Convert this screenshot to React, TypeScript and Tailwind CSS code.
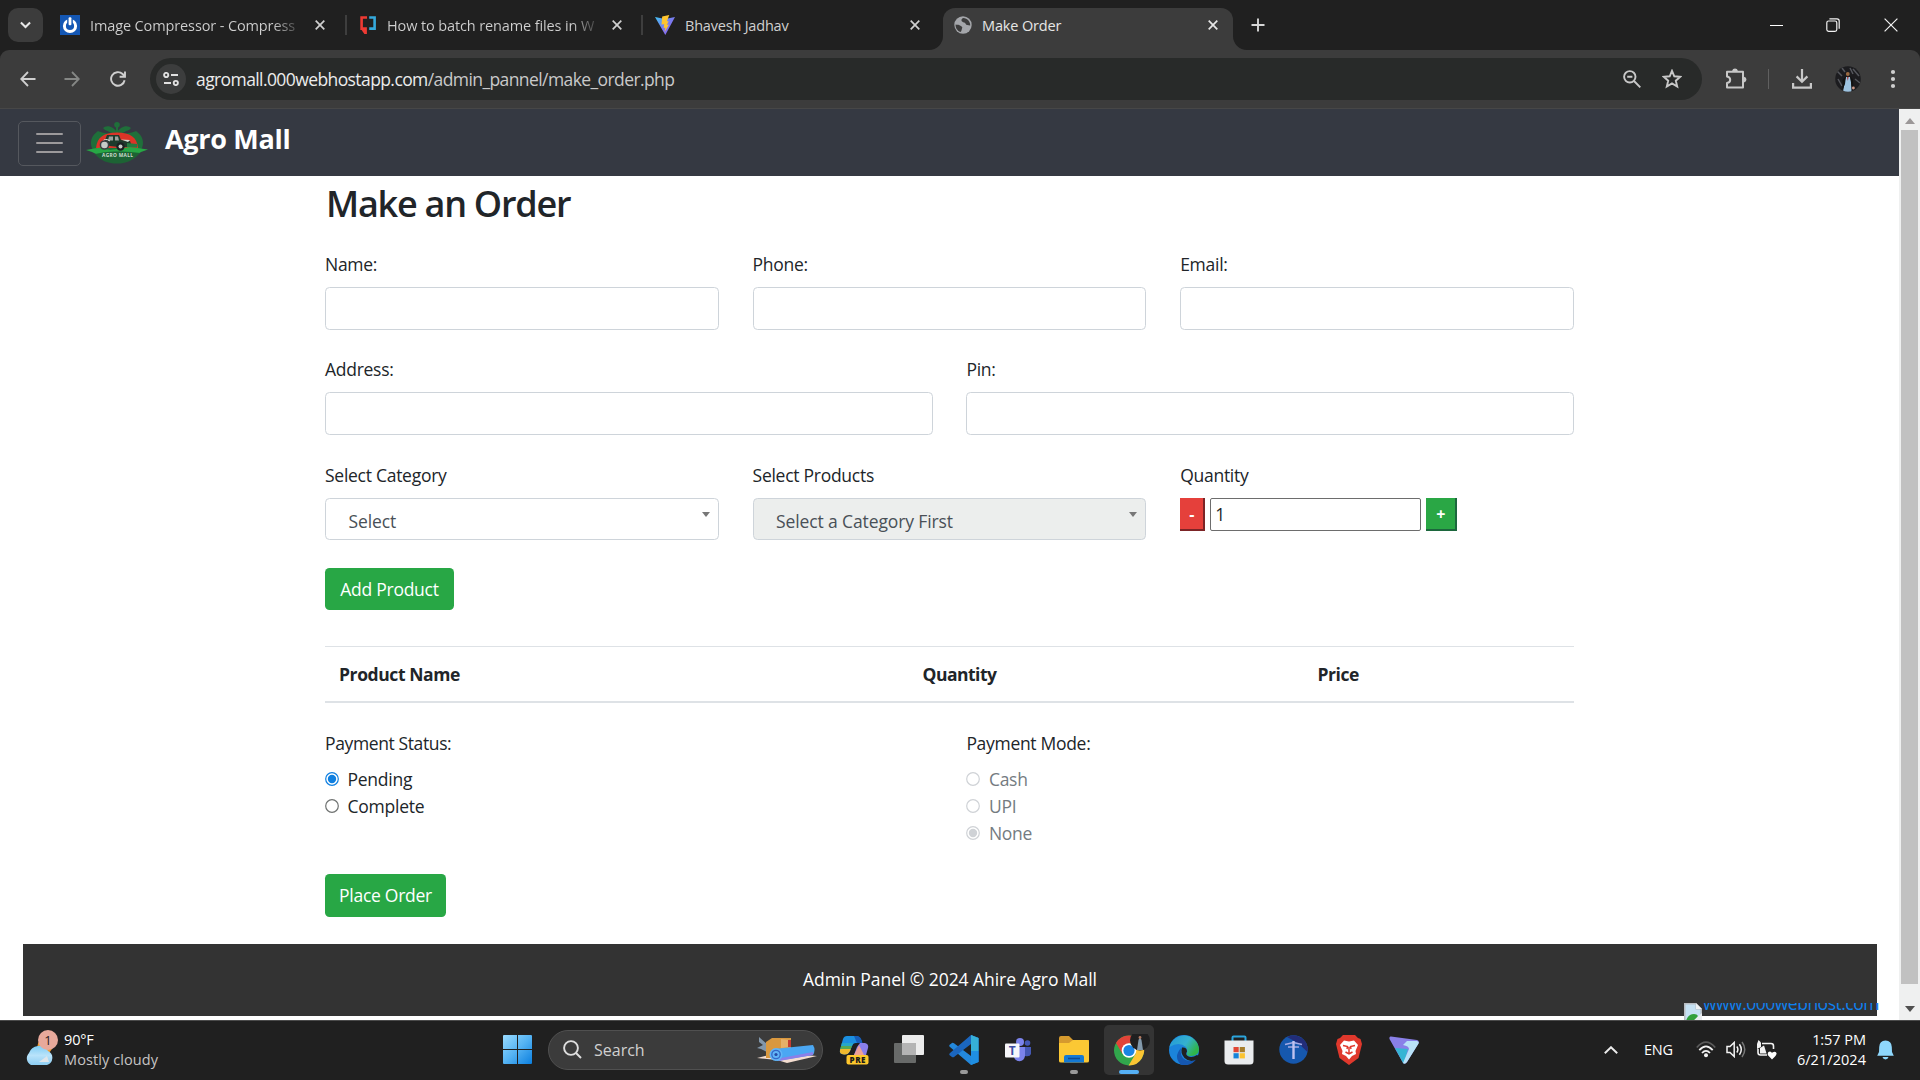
import React from "react";

function CloseIcon({ className }: { className: string }) {
  return (
    <svg viewBox="0 0 10 10" className={className} fill="none" stroke="currentColor" strokeWidth="1.7">
      <path d="M0.7 0.7 L9.3 9.3 M9.3 0.7 L0.7 9.3" />
    </svg>
  );
}

function TabStrip() {
  return (
    <div className="flex h-[50px] w-full bg-[#202020] text-[14.5px] text-[#d0d0d0]">
      <div className="flex w-[345px] items-center">
        <div className="ml-2 flex h-[34px] w-[35px] items-center justify-center rounded-[10px] bg-[#3c3c3c]">
          <svg viewBox="0 0 12 8" className="h-[8px] w-[11px]" fill="none" stroke="#e8e8e8" strokeWidth="2.2">
            <path d="M1 1.2 L6 6.2 L11 1.2" />
          </svg>
        </div>
        <svg viewBox="0 0 20 20" className="ml-[17px] h-5 w-5">
          <rect width="20" height="20" fill="#1457b4" />
          <circle cx="10" cy="11" r="5.6" fill="none" stroke="#fff" strokeWidth="3" />
          <rect x="7.2" y="2" width="5.6" height="8" fill="#1457b4" />
          <rect x="8.6" y="2.3" width="2.8" height="8" rx="1" fill="#fff" />
        </svg>
        <div className="mt-[2px] ml-[10px] w-[208px] overflow-hidden whitespace-nowrap bg-gradient-to-r from-[#d0d0d0] from-88% to-[#444444] bg-clip-text tracking-[-0.12px] text-transparent">
          Image Compressor - Compress
        </div>
        <CloseIcon className="ml-[17px] h-[10px] w-[10px]" />
      </div>
      <div className="flex w-[296px] items-center">
        <div className="h-5 w-[2px] bg-[#3e3e3e]" />
        <svg viewBox="0 0 16 18" className="ml-[13px] h-[18px] w-4" fill="none" strokeWidth="2.6">
          <path d="M7 1.5 H1.6 V12.6 H5.6 V17.5 L2.5 13" stroke="#ee3a33" />
          <path d="M9.2 1.5 H14.6 V12.6 H9.2" stroke="#35a9dc" />
        </svg>
        <div className="mt-[2px] ml-[11px] w-[210px] overflow-hidden whitespace-nowrap bg-gradient-to-r from-[#d0d0d0] from-88% to-[#3c3c3c] bg-clip-text tracking-[-0.12px] text-transparent">
          How to batch rename files in W
        </div>
        <CloseIcon className="ml-[15px] h-[10px] w-[10px]" />
      </div>
      <div className="flex w-[302px] items-center">
        <div className="h-5 w-[2px] bg-[#3e3e3e]" />
        <svg viewBox="0 0 20 20" className="ml-3 h-5 w-5">
          <defs>
            <linearGradient id="vite" x1="0" y1="0" x2="1" y2="1">
              <stop offset="0" stopColor="#41c5f5" />
              <stop offset="0.5" stopColor="#7a7bf0" />
              <stop offset="1" stopColor="#8d5cf0" />
            </linearGradient>
          </defs>
          <path d="M0 2 L10 4 L20 2 L10.3 20 Z" fill="url(#vite)" />
          <path d="M14.3 0 L7.2 1.4 L6.5 9.6 L9.2 9.2 L8.6 13.2 L10.4 12.6 L9.6 17 L14 9.6 L11.8 9.9 L13.7 6.2 L11.9 6.3 Z" fill="#ffc530" />
        </svg>
        <div className="mt-[2px] ml-[10px] w-[210px] whitespace-nowrap tracking-[-0.2px]">Bhavesh Jadhav</div>
        <CloseIcon className="ml-[15px] h-[10px] w-[10px]" />
      </div>
      <div className="relative mt-[8px] flex h-[42px] w-[290px] items-center rounded-t-[12px] bg-[#3c3c3c] pb-2 text-[#e6e6e6]">
        <svg viewBox="0 0 14 14" className="absolute bottom-0 left-[-14px] h-[14px] w-[14px]">
          <path d="M14 0 V14 H0 A14 14 0 0 0 14 0 Z" fill="#3c3c3c" />
        </svg>
        <svg viewBox="0 0 14 14" className="absolute right-[-14px] bottom-0 h-[14px] w-[14px]">
          <path d="M0 0 V14 H14 A14 14 0 0 1 0 0 Z" fill="#3c3c3c" />
        </svg>
        <svg viewBox="0 0 18 18" className="ml-[11px] h-[18px] w-[18px]">
          <circle cx="9" cy="9" r="8.7" fill="#a4a6aa" />
          <path d="M1.6 8.5 C3 9 4 8.4 5.5 9.2 C7.5 10.3 9 11 8 12.5 C7.5 13.8 7.8 15 6.5 16 C3.5 15 1.4 12 1.6 8.5 Z" fill="#3c3c3c" />
          <path d="M9 2 C7.6 2.8 7 4 7.8 5.3 C9 6.8 11 6 11.6 7.8 C12.2 9.6 14 9 16.2 9.6 C16.6 6 13.5 1.9 9 2 Z" fill="#3c3c3c" />
        </svg>
        <div className="mt-[2px] ml-[10px] w-[210px] tracking-[-0.15px]">Make Order</div>
        <CloseIcon className="ml-[16px] h-[10px] w-[10px]" />
      </div>
      <div className="flex flex-1 items-center">
        <svg viewBox="0 0 14 14" className="ml-[18px] h-[14px] w-[14px]" stroke="#d6d6d6" strokeWidth="1.9">
          <path d="M7 0.5 V13.5 M0.5 7 H13.5" />
        </svg>
        <div className="flex-1" />
        <div className="h-px w-[13px] bg-white" />
        <svg viewBox="0 0 14 14" className="ml-[43px] h-[14px] w-[14px]" fill="none" stroke="#f2f2f2" strokeWidth="1.2">
          <rect x="0.8" y="3" width="10" height="10.3" rx="1.8" />
          <path d="M3.4 0.8 H11 Q13.2 0.8 13.2 3 V10.8" />
        </svg>
        <svg viewBox="0 0 14 14" className="mr-[22px] ml-[44px] h-[14px] w-[14px]" stroke="#f2f2f2" strokeWidth="1.2">
          <path d="M0.6 0.6 L13.4 13.4 M13.4 0.6 L0.6 13.4" />
        </svg>
      </div>
    </div>
  );
}

function Toolbar() {
  return (
    <div className="h-[59px] bg-[#202020]">
      <div className="flex h-[59px] items-center rounded-t-[9px] border-b border-[#474747] bg-[#3c3c3c]">
        <svg viewBox="0 0 16 16" className="ml-5 h-4 w-4" fill="none" stroke="#cfcfcf" strokeWidth="1.8">
          <path d="M15.5 8 H1.5 M8 1 L1.2 8 L8 15" />
        </svg>
        <svg viewBox="0 0 16 16" className="ml-[28px] h-4 w-4" fill="none" stroke="#858785" strokeWidth="1.8">
          <path d="M0.5 8 H14.5 M8 1 L14.8 8 L8 15" />
        </svg>
        <svg viewBox="0 0 16 16" className="ml-[30px] h-4 w-4" fill="none" stroke="#cfcfcf" strokeWidth="1.9">
          <path d="M14.6 9.2 A6.8 6.8 0 1 1 12.6 3 L14.6 5 M15 0.5 V5.7 H9.6" />
        </svg>
        <div className="ml-[24px] flex h-[42px] w-[1552px] items-center rounded-full bg-[#282a29]">
          <div className="ml-[6px] flex h-[30px] w-[30px] items-center justify-center rounded-full bg-[#3c3d3d]">
            <svg viewBox="0 0 16 14" className="h-[14px] w-4" fill="none" stroke="#e0e0e0" strokeWidth="1.9">
              <circle cx="3.2" cy="3" r="2.1" />
              <path d="M8 3 H15 M1 11 H8" />
              <circle cx="12.8" cy="11" r="2.1" />
            </svg>
          </div>
          <div className="mt-px ml-[10px] text-[17.5px] tracking-[-0.59px] whitespace-nowrap text-[#ececec]">
            agromall.000webhostapp.com<span className="text-[#c9c9c9]">/admin_pannel/make_order.php</span>
          </div>
          <div className="flex-1" />
          <svg viewBox="0 0 18 18" className="h-[18px] w-[18px]" fill="none" stroke="#c8c8c8" strokeWidth="1.9">
            <circle cx="6.8" cy="6.8" r="5.7" />
            <path d="M4.2 6.8 H9.4 M11 11 L17.3 17.3" />
          </svg>
          <svg viewBox="0 0 20 20" className="mr-[20px] ml-[21px] h-5 w-5" fill="none" stroke="#c8c8c8" strokeWidth="1.9">
            <path d="M10 1.8 L12.3 7.3 L18.3 7.8 L13.8 11.7 L15.2 17.6 L10 14.4 L4.8 17.6 L6.2 11.7 L1.7 7.8 L7.7 7.3 Z" />
          </svg>
        </div>
        <svg viewBox="0 0 22 22" className="ml-[23px] h-[22px] w-[22px]" fill="none" stroke="#c8c8c8" strokeWidth="2" strokeLinejoin="round">
          <path d="M2 3.8 H18 V19.6 H2 V15 Q5.2 14.5 5.2 11.7 Q5.2 9 2 8.4 Z" />
          <path d="M8 3 A2.1 2.1 0 0 1 12 3 M19 9.6 A2.1 2.1 0 0 1 19 13.6" fill="#c8c8c8" />
        </svg>
        <div className="ml-[21px] h-5 w-px bg-[#606060]" />
        <svg viewBox="0 0 20 20" className="ml-[23px] h-5 w-5" fill="none" stroke="#c8c8c8" strokeWidth="2.2">
          <path d="M10 0 V12.4 M4.6 7.4 L10 12.8 L15.4 7.4 M1.1 14 V18.7 H18.9 V14" />
        </svg>
        <svg viewBox="0 0 26 26" className="ml-[23px] h-[26px] w-[26px]">
          <defs>
            <clipPath id="av"><circle cx="13" cy="13" r="12.8" /></clipPath>
          </defs>
          <g clipPath="url(#av)">
            <rect width="26" height="26" fill="#1c1c1f" />
            <path d="M2 5 L7 10 M18 3 L24 10 M3 13 L7 20 M20 13 L25 17 M7 2 L10 6 M15 2 L18 8" stroke="#54565c" strokeWidth="1.5" />
            <path d="M8 26 L10 14 L11 11 H15 L16 15 L16.5 26 Z" fill="#9dc3e0" />
            <path d="M7.5 14 L11 10 L10 18 L7.5 24 Z M15 10 L18 14 L18.5 24 L16.5 20 Z" fill="#111" />
            <circle cx="12.8" cy="8" r="1.9" fill="#9a6a42" />
            <path d="M12 11 L13.6 11 L12.8 15 Z" fill="#a33" />
            <circle cx="18.4" cy="22" r="1.4" fill="#c98" />
          </g>
        </svg>
        <svg viewBox="0 0 6 20" className="ml-[29px] h-5 w-[6px]" fill="#cfcfcf">
          <circle cx="3" cy="3" r="2.1" />
          <circle cx="3" cy="10" r="2.1" />
          <circle cx="3" cy="17" r="2.1" />
        </svg>
      </div>
    </div>
  );
}

function AgroLogo() {
  return (
    <svg viewBox="0 0 62 42" className="ml-[5px] h-[42px] w-[62px]">
      <path d="M12 9 C5 14 3 21 7 28 H55 C59 21 57 14 50 9 C42 13 20 13 12 9 Z" fill="#1f6f3a" />
      <path d="M31 10 C25 2 19 4 17 6 C21 11 27 12 31 10 C35 12 41 11 45 6 C43 4 37 2 31 10 Z" fill="#1f6f3a" />
      <path d="M15 10 Q19 6 25 11 Z M47 10 Q43 6 37 11 Z" fill="#353942" />
      <circle cx="31" cy="2.8" r="2.8" fill="#1f6f3a" />
      <path d="M31 4 V11" stroke="#1f6f3a" strokeWidth="2" />
      <path d="M10 26 C11 15 18 10.5 31 10.5 C44 10.5 51 15 52 26 Z" fill="#dc3427" />
      <path d="M0 28 L8 26.5 L15 25.5 L24 28 L44 25 L62 27.5 L55 30 L52 32 L31 34 L10 32 L6 30 Z" fill="#27a745" />
      <path d="M9 32 Q20 29 31 29.5 Q42 29 54 31 C47 39 40 41.5 31 41.5 C22 41.5 15 39 9 32 Z" fill="#1d6334" />
      <path d="M21 13 H33 L35 18 L44 19 L46 25 H33 L24 24 L15 21 L19 18 Z" fill="#1f3a2c" />
      <path d="M23 14.5 H27 V18.5 H22 Z M29 14.5 H32 L33 18.5 H29 Z" fill="#9ba29d" />
      <path d="M16 20 Q19 15.5 24 19" fill="none" stroke="#e0e4e0" strokeWidth="1" />
      <circle cx="18.5" cy="23" r="4.8" fill="#3a3f40" />
      <circle cx="18.5" cy="23" r="3.3" fill="#c7ccc7" />
      <circle cx="34.5" cy="24.5" r="4.2" fill="#1b2022" />
      <circle cx="34.5" cy="24.5" r="2" fill="#c7ccc7" />
      <path d="M35 17.5 L44 18 L42 20 Z" fill="#d5dbd5" />
      <path d="M41 21 L51 22 L51 25.5 L41 25 Z" fill="#237b3f" />
      <text x="31.5" y="34.8" textAnchor="middle" fontSize="4.8" fontWeight="700" textLength="31" fill="#cfdccf" fontFamily="Open Sans">AGRO MALL</text>
    </svg>
  );
}

function Field({ label }: { label: string }) {
  return (
    <div className="flex-1">
      <div className="mb-[9px] h-[27px] leading-[27px]">{label}</div>
      <div className="h-[42.75px] rounded-[4.5px] border border-[#ced4da] bg-white" />
    </div>
  );
}

function SelectField({ label, value, disabled }: { label: string; value: string; disabled?: boolean }) {
  return (
    <div className="flex-1">
      <div className="mb-[9px] h-[27px] leading-[27px]">{label}</div>
      <div
        className={
          disabled
            ? "flex h-[42.75px] justify-between rounded-[4.5px] border border-[#ced4da] bg-[#eceeed] pr-[8px] pl-[22.5px] text-[#495057]"
            : "flex h-[42.75px] justify-between rounded-[4.5px] border border-[#ced4da] bg-white pr-[8px] pl-[22.5px] text-[#495057]"
        }
      >
        <span className="pt-[9px] leading-[27px] tracking-[-0.12px]">{value}</span>
        <svg viewBox="0 0 8 5" className="mt-[13px] h-[5px] w-2">
          <path d="M0 0 H8 L4 5 Z" fill="#777" />
        </svg>
      </div>
    </div>
  );
}

function Radio({ label, checked, disabled }: { label: string; checked?: boolean; disabled?: boolean }) {
  const ring = disabled ? "#cfd2d6" : checked ? "#0f7fe0" : "#6f7271";
  return (
    <div className={disabled ? "flex h-[27px] text-[#747b81]" : "flex h-[27px]"}>
      <svg viewBox="0 0 14 14" className="mt-[6px] h-[14px] w-[14px]">
        <circle cx="7" cy="7" r="6.3" fill="#fff" stroke={ring} strokeWidth="1.2" />
        {checked && <circle cx="7" cy="7" r="4.2" fill={ring} />}
      </svg>
      <span className="ml-[8.5px] leading-[27px] tracking-[-0.25px]">{label}</span>
    </div>
  );
}

function PageContent() {
  return (
    <div className="flex h-[911px] w-[1899px] flex-col overflow-hidden bg-white">
      <div className="flex h-[67px] shrink-0 items-center bg-[#353942]">
        <div className="mt-px ml-[18px] flex h-[45px] w-[63px] flex-col items-center justify-center gap-[6.5px] rounded-[5px] border border-[#55585e]">
          <div className="h-[2.5px] w-[27px] rounded-full bg-[#9c9a9c]" />
          <div className="h-[2.5px] w-[27px] rounded-full bg-[#9c9a9c]" />
          <div className="h-[2.5px] w-[27px] rounded-full bg-[#9c9a9c]" />
        </div>
        <AgroLogo />
        <div className="mb-[6px] ml-[17px] text-[27px] font-bold tracking-[-0.3px] text-white">Agro Mall</div>
      </div>
      <div className="ml-[325px] flex w-[1249px] flex-col items-start text-[17.5px] tracking-[-0.27px] text-[#212529]">
        <h2 className="mt-[6px] h-[43px] pl-px text-[36px] leading-[43px] font-semibold tracking-[-1.25px]">Make an Order</h2>
        <div className="mt-[26px] flex w-full gap-[33.75px]">
          <Field label="Name:" />
          <Field label="Phone:" />
          <Field label="Email:" />
        </div>
        <div className="mt-[26.5px] flex w-full gap-[33.75px]">
          <Field label="Address:" />
          <Field label="Pin:" />
        </div>
        <div className="mt-[26.5px] flex w-full gap-[33.75px]">
          <SelectField label="Select Category" value="Select" />
          <SelectField label="Select Products" value="Select a Category First" disabled />
          <div className="flex-1">
            <div className="mb-[9px] h-[27px] leading-[27px]">Quantity</div>
            <div className="flex h-[33px]">
              <div className="flex w-[25px] items-center justify-center border-r-2 border-b-2 border-[#7c2426] bg-[#e5403b] pt-[2px] text-[16px] font-bold text-white">-</div>
              <div className="ml-[5px] w-[211px] rounded-[2px] border border-[#6d6d6d] pl-[4px] leading-[31px]">1</div>
              <div className="ml-[5px] flex w-[31px] items-center justify-center border-r-2 border-b-2 border-[#1c673d] bg-[#2aa745] pt-[2px] text-[16px] font-bold text-white">+</div>
            </div>
          </div>
        </div>
        <div className="mt-[28px] flex h-[42px] w-[129px] items-center justify-center rounded-[4.5px] bg-[#28a745] whitespace-nowrap text-white">Add Product</div>
        <div className="mt-[36px] flex h-[57px] w-full items-center border-t border-b-2 border-[#dee2e6] pl-[14px] font-bold tracking-[-0.45px]">
          <div className="w-[583.5px] tracking-[-0.4px]">Product Name</div>
          <div className="w-[395px] tracking-[-0.5px]">Quantity</div>
          <div>Price</div>
        </div>
        <div className="mt-[27px] flex w-full gap-[33.75px]">
          <div className="flex-1">
            <div className="mb-[9px] h-[27px] leading-[27px] tracking-[-0.38px]">Payment Status:</div>
            <Radio label="Pending" checked />
            <Radio label="Complete" />
          </div>
          <div className="flex-1">
            <div className="mb-[9px] h-[27px] leading-[27px] tracking-[-0.3px]">Payment Mode:</div>
            <Radio label="Cash" disabled />
            <Radio label="UPI" disabled />
            <Radio label="None" checked disabled />
          </div>
        </div>
        <div className="mt-[27px] flex h-[43px] w-[121px] items-center justify-center rounded-[4.5px] bg-[#28a745] pb-px whitespace-nowrap text-white">Place Order</div>
      </div>
      <div className="relative mx-[23px] mt-[27px] flex h-[72px] w-[1854px] shrink-0 items-center justify-center bg-[#333333] pb-[2px] text-[17.5px] tracking-[-0.06px] text-white">
        <span>Admin Panel © 2024 Ahire Agro Mall</span>
        <div className="absolute top-[59px] left-[1661px] flex h-[17px] w-[200px] overflow-hidden">
          <svg viewBox="0 0 18 18" className="h-[18px] w-[18px] shrink-0">
            <path d="M0 0 H12 L18 6 V18 H0 Z" fill="#b9bdc2" />
            <path d="M1.5 1.5 H11.5 V6.5 H16.5 V18 H1.5 Z" fill="#c6e2f4" />
            <path d="M2 18 Q4 11 10 11 Q13 11 14 13 L10 18 Z" fill="#31a03c" />
            <path d="M12 0 L18 6 H12 Z" fill="#eef1f4" />
            <path d="M18 10 L9 18 H18 Z" fill="#e8ecef" />
          </svg>
          <span className="mt-[-13px] ml-px h-[27px] text-[17.5px] leading-[27px] tracking-[-0.5px] whitespace-nowrap text-[#0f80ee]">www.000webhost.com</span>
        </div>
      </div>
    </div>
  );
}

function ScrollBar() {
  return (
    <div className="flex h-[911px] w-[21px] flex-col items-center bg-[#eff0f0]">
      <svg viewBox="0 0 10 6" className="mt-[9px] h-[6px] w-[10px]"><path d="M0 6 H10 L5 0 Z" fill="#9b9798" /></svg>
      <div className="mt-[6px] h-[854px] w-[17px] bg-[#c1c1c1]" />
      <svg viewBox="0 0 10 6" className="mt-[22px] h-[6px] w-[10px]"><path d="M0 0 H10 L5 6 Z" fill="#505050" /></svg>
    </div>
  );
}

function TaskCell({ children, mark }: { children: React.ReactNode; mark?: boolean }) {
  return (
    <div className="relative flex h-[59px] w-[55px] items-center justify-center">
      {children}
      {mark && <div className="absolute bottom-[5px] h-[4px] w-2 rounded-full bg-[#9a9a9a]" />}
    </div>
  );
}

function Taskbar() {
  return (
    <div className="flex h-[60px] items-center border-t border-[#4b4b4b] bg-[#202020] pb-[2px] text-[14.5px] text-white">
      <div className="flex w-[503px] items-center">
        <svg viewBox="0 0 36 38" className="mb-[3px] ml-[23px] h-[38px] w-9">
          <defs>
            <linearGradient id="cl" x1="0" y1="0" x2="0" y2="1">
              <stop offset="0" stopColor="#7fcdf5" />
              <stop offset="0.5" stopColor="#b9e3fa" />
              <stop offset="1" stopColor="#8ccdf2" />
            </linearGradient>
          </defs>
          <circle cx="22" cy="17" r="7.5" fill="#f39a2b" />
          <path d="M8 36 A7.5 7.5 0 0 1 6 24 A10.5 10.5 0 0 1 25 22 A7.5 7.5 0 0 1 24 36 Z" fill="url(#cl)" />
          <path d="M16 33 L24 27 L26 33 Z" fill="#dfe5ea" />
          <circle cx="25" cy="11" r="10" fill="#e8a99b" />
          <text x="25" y="15.5" textAnchor="middle" fontSize="13" fill="#2b1a18" fontFamily="Open Sans">1</text>
        </svg>
        <div className="ml-[5px] leading-[20px]">
          <div className="tracking-[-0.15px]">90°F</div>
          <div className="tracking-[0.1px] text-[#c6c4c4]">Mostly cloudy</div>
        </div>
      </div>
      <svg viewBox="0 0 29 29" className="h-[29px] w-[29px]">
        <defs>
          <linearGradient id="win" x1="0" y1="0" x2="1" y2="1">
            <stop offset="0" stopColor="#9adcff" />
            <stop offset="0.5" stopColor="#55b3f3" />
            <stop offset="1" stopColor="#0b7fdf" />
          </linearGradient>
        </defs>
        <path d="M0 1 Q0 0 1 0 H14 V14 H0 Z M15 0 H28 Q29 0 29 1 V14 H15 Z M0 15 H14 V29 H1 Q0 29 0 28 Z M15 15 H29 V28 Q29 29 28 29 H15 Z" fill="url(#win)" />
      </svg>
      <div className="mr-[3px] ml-[16px] flex h-10 w-[275px] items-center rounded-full border border-[#505050] bg-[#3b3b3b]">
        <svg viewBox="0 0 19 19" className="ml-[14px] h-[19px] w-[19px]" fill="none" stroke="#dedede" strokeWidth="1.9">
          <circle cx="8" cy="8" r="6.9" />
          <path d="M13 13 L18 18" />
        </svg>
        <div className="ml-[12px] flex-1 text-[16px] tracking-[0px] text-[#d0d0d0]">Search</div>
        <svg viewBox="0 0 60 28" className="mr-[5px] h-[28px] w-[60px]">
          <path d="M0 22 L20 17 L60 20 L30 27 L20 24 Z" fill="#f4ddd0" />
          <path d="M2 1 L10 8 L12 17 L4 13 L0 12 L6 9 L2 6 Z" fill="#8297ab" />
          <path d="M9 6 L15 2 H34 L34 12 L28 22 H9 Z" fill="#d9983f" />
          <path d="M24 3 L34 4 L34 11 L24 12 Z" fill="#e5b068" />
          <path d="M31 4 H34 V11 H31 Z" fill="#c43c30" />
          <path d="M17 13 L56 9 Q59 14 56 19 L20 25 Z" fill="#4ba7f3" />
          <path d="M24 22 L56 16 L56 19 L22 25 Z" fill="#8b80e8" />
          <circle cx="19" cy="18.5" r="6.5" fill="#62b5f7" />
          <circle cx="19" cy="18.5" r="4.2" fill="none" stroke="#3468c8" strokeWidth="1.3" />
          <circle cx="19" cy="18.5" r="1.6" fill="#264ca5" />
        </svg>
      </div>
      <TaskCell>
        <svg viewBox="0 0 30 30" className="h-[30px] w-[30px]">
          <path d="M8 1 H17 Q21 1 22.5 6 L23 8 H17 Q14 8 13 11 L11 16 Q9 20 5 19.5 Q0 19 1 15 L4 4 Q5 1 8 1 Z" fill="#1b8fe0" />
          <path d="M2.9 8 H14.4 L13 11 H2.1 Z" fill="#26a7c8" />
          <path d="M2.1 11 H13 L11.8 14 H1.3 Z" fill="#56a954" />
          <path d="M1.3 14 H11.8 L11 16 Q9 20 5 19.5 Q0 19 1 15 Z" fill="#f1b92d" />
          <path d="M15 1 H18 Q22 1 23.5 8 H18 Z" fill="#165cb8" />
          <path d="M21 8 H26 Q30 9 29 13 L27 20 H15 L18 12 Z" fill="#8a7fea" />
          <path d="M20 10 L25 20 H15 Z" fill="#eea196" />
          <rect x="7.5" y="20" width="22" height="9.4" rx="2" fill="#ffc82c" />
          <text x="18.5" y="27.6" textAnchor="middle" fontSize="8" fontWeight="800" textLength="16" fill="#1b1b1b" fontFamily="Open Sans">PRE</text>
        </svg>
      </TaskCell>
      <TaskCell>
        <svg viewBox="0 0 30 28" className="mb-[1px] h-[28px] w-[30px]">
          <rect x="8" y="0" width="22" height="20" rx="1" fill="#ececec" />
          <rect x="0" y="8" width="22" height="20" rx="1" fill="#686a69" />
          <path d="M8 8 H22 V20 H8 Z" fill="#b4b4b4" />
        </svg>
      </TaskCell>
      <TaskCell mark>
        <svg viewBox="0 0 30 30" className="h-[30px] w-[30px]">
          <path d="M22 0 L29.5 3 V27 L22 30 L1 12 Q-0.5 10.5 1 9.5 L3 8 Q4 7.6 5 8.3 L22 21 Z" fill="#2388dc" />
          <path d="M22 0 L29.5 3 V27 L22 21 V9 L5 22 Q4 22.6 3 22 L1 20.5 Q-0.5 19.5 1 18 Z" fill="#1b66bf" />
          <path d="M22 0 L29.5 3 V16 H22 Z" fill="#36b0d8" />
          <path d="M22 16 H29.5 V27 L22 30 Z" fill="#1f8fe2" />
        </svg>
      </TaskCell>
      <TaskCell>
        <svg viewBox="0 0 27 24" className="h-[24px] w-[27px]">
          <circle cx="22.5" cy="5" r="2.8" fill="#4458b4" />
          <path d="M19 9 H26 V16 Q25 19 20 18 Z" fill="#4458b4" />
          <circle cx="15" cy="4" r="4" fill="#7b83eb" />
          <path d="M9 9 H20 V18 Q19 24 13 23 Q9 22 9 18 Z" fill="#7b83eb" />
          <rect x="0" y="5.5" width="14.5" height="14" rx="1" fill="#f6f6fa" />
          <text x="7.2" y="17" textAnchor="middle" fontSize="12" fontWeight="700" fill="#3d4da3" fontFamily="Open Sans">T</text>
        </svg>
      </TaskCell>
      <TaskCell mark>
        <svg viewBox="0 0 30 27" className="h-[27px] w-[30px]">
          <path d="M0 2 Q0 0 2 0 H10 L14 4 H30 V12 H0 Z" fill="#d59a2e" />
          <path d="M0 7 H10 L14 4 H28 Q30 4 30 6 V25 Q30 26.5 28 26.5 H2 Q0 26.5 0 25 Z" fill="#fbc834" />
          <path d="M5 26.5 V21 Q5 19 7 19 H23 Q25 19 25 21 V26.5 Z" fill="#1479d3" />
          <path d="M9 22.5 H21" stroke="#0c4b95" strokeWidth="1.6" />
        </svg>
      </TaskCell>
      <TaskCell>
        <div className="relative flex h-[50px] w-[50px] items-center justify-center rounded-[5px] bg-[#343434]">
          <svg viewBox="0 0 36 32" className="ml-[6px] h-8 w-9">
            <circle cx="15" cy="16.5" r="15" fill="#31a64c" />
            <path d="M2 9 A15 15 0 0 1 28 9 L15 9 L8.5 20 Z" fill="#e24338" />
            <path d="M28 9 A15 15 0 0 1 14.6 31.5 L21.5 20 L21 12 L15 9 Z" fill="#fbc533" />
            <circle cx="15" cy="16.5" r="7.3" fill="#fff" />
            <circle cx="15" cy="16.5" r="5.6" fill="#1a85e3" />
            <circle cx="26" cy="6.5" r="10" fill="#1f1f20" />
            <path d="M23 16 L24.5 6 Q26 2 27.5 6 L29 16 Z" fill="#8299ab" />
            <circle cx="26" cy="3.5" r="1.4" fill="#b27a62" />
          </svg>
          <div className="absolute bottom-[1px] h-[4px] w-[20px] rounded-full bg-[#55b0f5]" />
        </div>
      </TaskCell>
      <TaskCell>
        <svg viewBox="0 0 30 30" className="h-[30px] w-[30px]">
          <defs>
            <linearGradient id="edge" x1="0" y1="0" x2="1" y2="0.5">
              <stop offset="0" stopColor="#2297d8" />
              <stop offset="0.6" stopColor="#35b1cf" />
              <stop offset="1" stopColor="#2fb64a" />
            </linearGradient>
          </defs>
          <circle cx="15" cy="15" r="15" fill="#1b84db" />
          <path d="M0.5 12 A15 15 0 0 1 30 14 Q30 21 22 21 Q17 21 18 18 Q19 15 17 12 Q10 6 0.5 12 Z" fill="url(#edge)" />
          <path d="M12 13 Q10 24 20 26 Q24 26 27.5 24 A15 15 0 0 1 12 29.7 Q4 22 12 13 Z" fill="#1557b0" />
          <path d="M13 12.5 Q18 12 18 16.5 Q16 19.5 19 21.2 Q23 23 28 20 L30 21 L27.5 24.5 Q21 28 15.5 23 Q11 18 13 12.5 Z" fill="#202020" />
        </svg>
      </TaskCell>
      <TaskCell>
        <svg viewBox="0 0 30 30" className="h-[30px] w-[30px]">
          <path d="M8.5 6 V2.6 Q8.5 1.6 9.5 1.6 H20.5 Q21.5 1.6 21.5 2.6 V6" fill="none" stroke="#2ba5dd" strokeWidth="2" />
          <path d="M0.5 5.5 H29.5 V26 Q29.5 29.5 26 29.5 H4 Q0.5 29.5 0.5 26 Z" fill="#eaecee" />
          <rect x="9.5" y="12" width="5.2" height="5.2" fill="#e04634" />
          <rect x="15.7" y="12" width="5.2" height="5.2" fill="#a67d2b" />
          <rect x="9.5" y="18.2" width="5.2" height="5.2" fill="#1583da" />
          <rect x="15.7" y="18.2" width="5.2" height="5.2" fill="#fbc432" />
        </svg>
      </TaskCell>
      <TaskCell>
        <svg viewBox="0 0 29 29" className="h-[29px] w-[29px]">
          <circle cx="14.5" cy="14.5" r="14.2" fill="#1658ae" />
          <path d="M8 2 A14.2 14.2 0 0 1 28.5 17 L19 8 Z" fill="#222d79" />
          <path d="M6 9.5 L14.5 7.5 L23 9.5 M9 12 H20" fill="none" stroke="#a5aae4" strokeWidth="1.3" />
          <path d="M14.5 6 V24" stroke="#c0c3ef" strokeWidth="2.4" />
        </svg>
      </TaskCell>
      <TaskCell>
        <svg viewBox="0 0 26 30" className="h-[30px] w-[26px]">
          <path d="M7 0 H19 L22 3 L24.5 4 L26 9 L22.5 23 L13 30 L3.5 23 L0 9 L1.5 4 L4 3 Z" fill="#e0382c" />
          <path d="M8 5.5 L13 6.5 L18 5.5 L22 10 L19.5 16 L20 19 L16 21 L13 24.5 L10 21 L6 19 L6.5 16 L4 10 Z" fill="#fff" />
          <path d="M7 10.5 L11.5 11.5 L11 14 M19 10.5 L14.5 11.5 L15 14 M13 12 V18 M9.5 17 L13 19 L16.5 17" fill="none" stroke="#e0382c" strokeWidth="1.5" />
        </svg>
      </TaskCell>
      <TaskCell>
        <svg viewBox="0 0 30 28" className="h-[28px] w-[30px]">
          <path d="M2 0.5 L28 4 Q31 5 29 8 L18 26 Q15.5 29 13.5 26 L0.5 3 Q0 0 2 0.5 Z" fill="#8a80e8" />
          <path d="M6 12 L19 13 L15 27.5 Q14 27.5 13 25 Z" fill="#36b5d4" />
          <path d="M18 5 L28 5 Q31 6 29 8.5 L18 26 Q16 29 14 27 L20 13 Q20 10 14 9 Z" fill="#b9e2f8" />
        </svg>
      </TaskCell>
      <div className="flex h-full flex-1 items-center justify-end">
        <svg viewBox="0 0 14 8" className="h-[8px] w-[14px]" fill="none" stroke="#ececec" strokeWidth="1.9"><path d="M0.8 7.2 L7 1.2 L13.2 7.2" /></svg>
        <div className="ml-[26px] w-[31px] text-[14.5px] tracking-[-0.2px]">ENG</div>
        <svg viewBox="0 0 20 17" className="ml-[21px] h-[17px] w-5" fill="none" strokeWidth="1.8">
          <path d="M0.8 6.5 Q10 -4.3 19.2 6.5" stroke="#5b5b5b" />
          <path d="M3.3 9.2 Q10 1.5 16.7 9.2 M6 12 Q10 7.7 14 12" stroke="#f2f2f2" />
          <circle cx="10" cy="14.3" r="2" fill="#f2f2f2" />
        </svg>
        <svg viewBox="0 0 20 17" className="ml-[10px] h-[17px] w-5" fill="none" strokeWidth="1.5">
          <path d="M1 5.5 H4 L8.2 1.5 V15.5 L4 11.5 H1 Z M10.8 5.5 Q13 8.5 10.8 11.5 M13.4 3.2 Q17.2 8.5 13.4 13.8" stroke="#f2f2f2" />
          <path d="M16 1 Q21.5 8.5 16 16" stroke="#777" />
        </svg>
        <svg viewBox="0 0 21 20" className="ml-[10px] h-5 w-[21px]">
          <path d="M6 3.5 H15 Q17.5 3.5 17.5 6 V9 M2 9 V12.5 Q2 15 4.5 15 H11" fill="none" stroke="#f2f2f2" strokeWidth="1.6" />
          <path d="M2.5 0 L5 2.5 V7 L1 9 V4 Z" fill="#f2f2f2" />
          <path d="M4 8 L8 5.5 L10.5 13.5 H4 Z" fill="#f2f2f2" />
          <path d="M16 19.5 L11.8 15 Q11.4 11.6 14.2 11.6 L16 12.8 Q20 10.4 20.6 13.6 Q20.6 15.4 16 19.5 Z" fill="#fff" />
        </svg>
        <div className="w-[89px] text-right leading-[20px]">
          <div className="tracking-[-0.05px]">1:57 PM</div>
          <div className="tracking-[0.05px]">6/21/2024</div>
        </div>
        <svg viewBox="0 0 17 20" className="mr-[26px] ml-[11px] h-5 w-[17px]">
          <path d="M8.5 0.5 Q14.5 0.5 14.8 7 L15 12 L16.8 15.8 H0.2 L2 12 L2.2 7 Q2.5 0.5 8.5 0.5 Z M5.5 17 H11.5 Q11 19.4 8.5 19.4 Q6 19.4 5.5 17 Z" fill="#8ed7fc" />
        </svg>
      </div>
    </div>
  );
}

export default function App() {
  return (
    <div className="flex h-[1080px] w-[1920px] flex-col overflow-hidden bg-white font-['Open_Sans','Noto_Sans',sans-serif]">
      <TabStrip />
      <Toolbar />
      <div className="flex h-[911px]">
        <PageContent />
        <ScrollBar />
      </div>
      <Taskbar />
    </div>
  );
}
